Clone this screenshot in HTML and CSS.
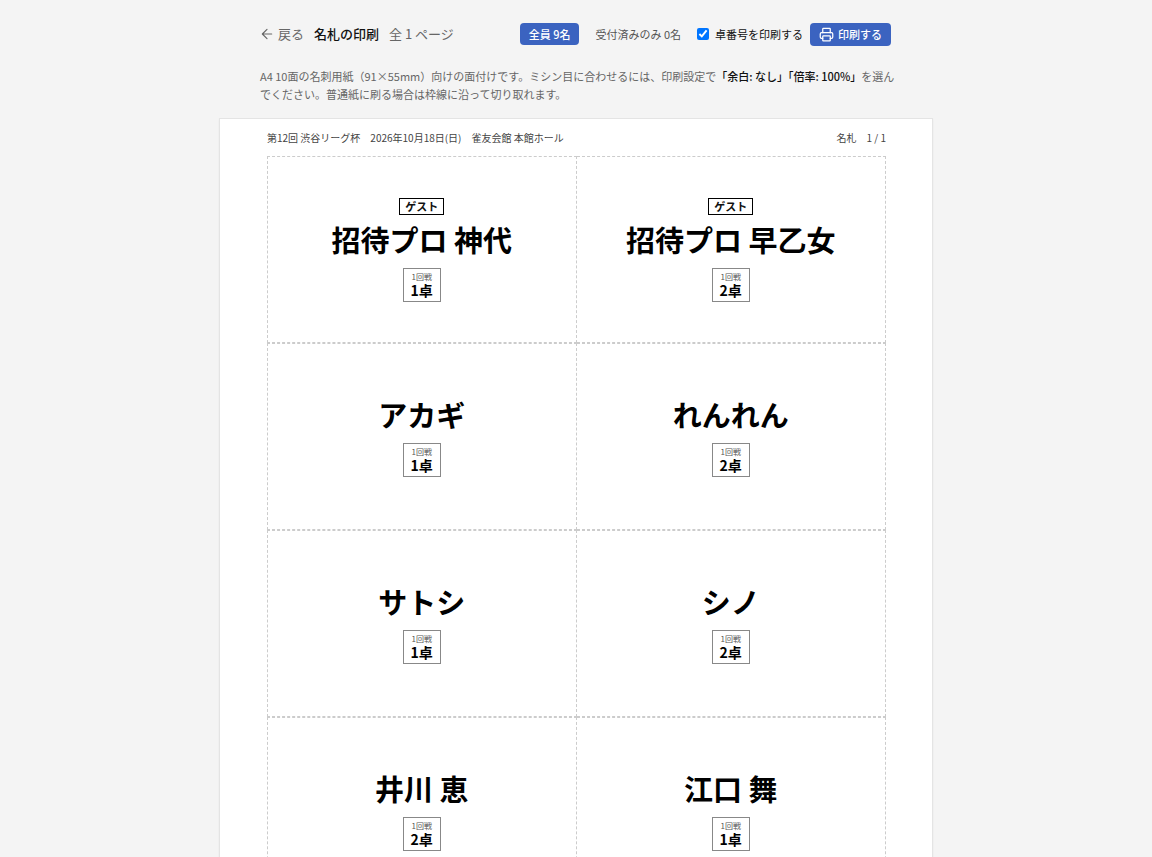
FILE: index.html
```
<!doctype html>
<html lang="ja">
<head>
  <meta charset="utf-8">
  <title>名札の印刷</title>
  <meta name="viewport" content="width=device-width,initial-scale=1">
  <link rel="stylesheet" href="styles.css">
</head>
<body>
  <main class="page">
    <header class="toolbar">
      <a href="#" class="back-link">
        <svg class="icon-back" viewBox="0 0 24 24" aria-hidden="true"><path d="M12 20l-8-8 8-8M20 12H4"/></svg>
        戻る
      </a>
      <h1 class="title">名札の印刷</h1>
      <span class="page-count">全 1 ページ</span>
      <div class="actions">
        <button type="button" class="filter-btn active">全員 9名</button>
        <button type="button" class="filter-btn">受付済みのみ 0名</button>
        <label class="check" for="showTable">
          <input type="checkbox" id="showTable" checked>
          卓番号を印刷する
        </label>
        <button type="button" class="print-btn">
          <svg class="icon-print" viewBox="0 0 24 24" aria-hidden="true">
            <path d="M6 18H4a2 2 0 0 1-2-2v-5a2 2 0 0 1 2-2h16a2 2 0 0 1 2 2v5a2 2 0 0 1-2 2h-2"/>
            <path d="M6 9V3a1 1 0 0 1 1-1h10a1 1 0 0 1 1 1v6"/>
            <rect x="6" y="14" width="12" height="8" rx="1"/>
          </svg>
          印刷する
        </button>
      </div>
    </header>

    <p class="hint">A4 10面の名刺用紙（91×55mm）向けの面付けです。ミシン目に合わせるには、印刷設定で<strong>「余白: なし」「倍率: 100%」</strong>を選んでください。普通紙に刷る場合は枠線に沿って切り取れます。</p>

    <section class="sheet">
      <div class="sheet-head">
        <span>第12回 渋谷リーグ杯　2026年10月18日(日)　雀友会館 本館ホール</span>
        <span>名札　1 / 1</span>
      </div>
      <div class="cards">
        <article class="card">
          <span class="guest">ゲスト</span>
          <h2 class="name">招待プロ 神代</h2>
          <div class="seat"><span class="round">1回戦</span><span class="table-no">1卓</span></div>
        </article>
        <article class="card">
          <span class="guest">ゲスト</span>
          <h2 class="name">招待プロ 早乙女</h2>
          <div class="seat"><span class="round">1回戦</span><span class="table-no">2卓</span></div>
        </article>
        <article class="card">
          <h2 class="name">アカギ</h2>
          <div class="seat"><span class="round">1回戦</span><span class="table-no">1卓</span></div>
        </article>
        <article class="card">
          <h2 class="name">れんれん</h2>
          <div class="seat"><span class="round">1回戦</span><span class="table-no">2卓</span></div>
        </article>
        <article class="card">
          <h2 class="name">サトシ</h2>
          <div class="seat"><span class="round">1回戦</span><span class="table-no">1卓</span></div>
        </article>
        <article class="card">
          <h2 class="name">シノ</h2>
          <div class="seat"><span class="round">1回戦</span><span class="table-no">2卓</span></div>
        </article>
        <article class="card">
          <h2 class="name">井川 恵</h2>
          <div class="seat"><span class="round">1回戦</span><span class="table-no">2卓</span></div>
        </article>
        <article class="card">
          <h2 class="name">江口 舞</h2>
          <div class="seat"><span class="round">1回戦</span><span class="table-no">1卓</span></div>
        </article>
      </div>
    </section>
  </main>
</body>
</html>
```
FILE: styles.css
```
:root {
  --bg: #f4f4f4;
  --text: #111;
  --muted: #666;
  --primary: #3b63c0;
  --cut: #ccc;
}

* {
  box-sizing: border-box;
  margin: 0;
}
body {
  font-family: "Noto Sans CJK JP", sans-serif;
  background: var(--bg);
  color: var(--text);
  font-size: 11px;
}
button {
  font: inherit;
  border: none;
  cursor: pointer;
}
svg {
  fill: none;
  stroke: currentColor;
  stroke-width: 2;
  stroke-linecap: round;
  stroke-linejoin: round;
}

.page {
  max-width: 714px;
  margin: 0 auto;
  padding: 22px 0;
}

/* 操作バー */
.toolbar {
  display: flex;
  flex-wrap: wrap;
  align-items: center;
  gap: 10px;
  padding: 0 42px 0 41px;
  font-size: 13px;
  line-height: 24px;
}
.back-link {
  display: flex;
  align-items: center;
  gap: 4px;
  color: var(--muted);
  text-decoration: none;
}
.icon-back { width: 14px; height: 14px; }
.title {
  font-size: 13px;
  font-weight: 500;
}
.page-count { color: var(--muted); }
.actions {
  display: flex;
  align-items: center;
  gap: 7px;
  margin-left: auto;
  font-size: 11px;
}
.filter-btn {
  padding: 0 9px;
  line-height: 22px;
  border-radius: 4px;
  background: none;
  color: #555;
}
.filter-btn.active {
  background: var(--primary);
  color: #fff;
  font-weight: 500;
}
.check {
  display: flex;
  align-items: center;
  gap: 6px;
}
.check input {
  width: 12px;
  height: 12px;
}
.print-btn {
  display: flex;
  align-items: center;
  gap: 4px;
  padding: 0 9px;
  line-height: 23px;
  border-radius: 4px;
  background: var(--primary);
  color: #fff;
  font-weight: 500;
}
.icon-print { width: 15px; height: 15px; }

.hint {
  padding: 0 36px 0 41px;
  margin: 21px 0 15px;
  line-height: 18px;
  color: var(--muted);
}
.hint strong {
  color: var(--text);
  font-weight: 500;
}

/* 用紙 */
.sheet {
  background: #fff;
  border: 1px solid #e4e4e4;
  box-shadow: 0 1px 2px rgba(0, 0, 0, .05);
  padding: 11px 46px 48px 47px;
}
.sheet-head {
  display: flex;
  justify-content: space-between;
  margin-bottom: 11px;
  font-size: 10px;
  line-height: 15px;
  color: #444;
}
.cards {
  display: grid;
  grid-template-columns: 1fr 1fr;
}
.card {
  display: flex;
  flex-direction: column;
  align-items: center;
  justify-content: center;
  min-height: 187px;
  border: 1px dashed var(--cut);
}
.card:nth-child(even) { border-left: none; }
.guest {
  padding: 0 5px;
  margin-bottom: 6px;
  border: 1px solid #000;
  font-size: 11px;
  font-weight: 700;
  line-height: 15px;
}
.name {
  font-size: 29px;
  font-weight: 700;
  line-height: 36px;
  color: #000;
}
.seat {
  display: flex;
  flex-direction: column;
  align-items: center;
  margin-top: 11px;
  padding: 2px 7px 3px;
  border: 1px solid #888;
}
.round {
  font-size: 8px;
  line-height: 12px;
  color: #555;
}
.table-no {
  font-size: 14px;
  font-weight: 700;
  line-height: 15px;
  color: #000;
}
```
